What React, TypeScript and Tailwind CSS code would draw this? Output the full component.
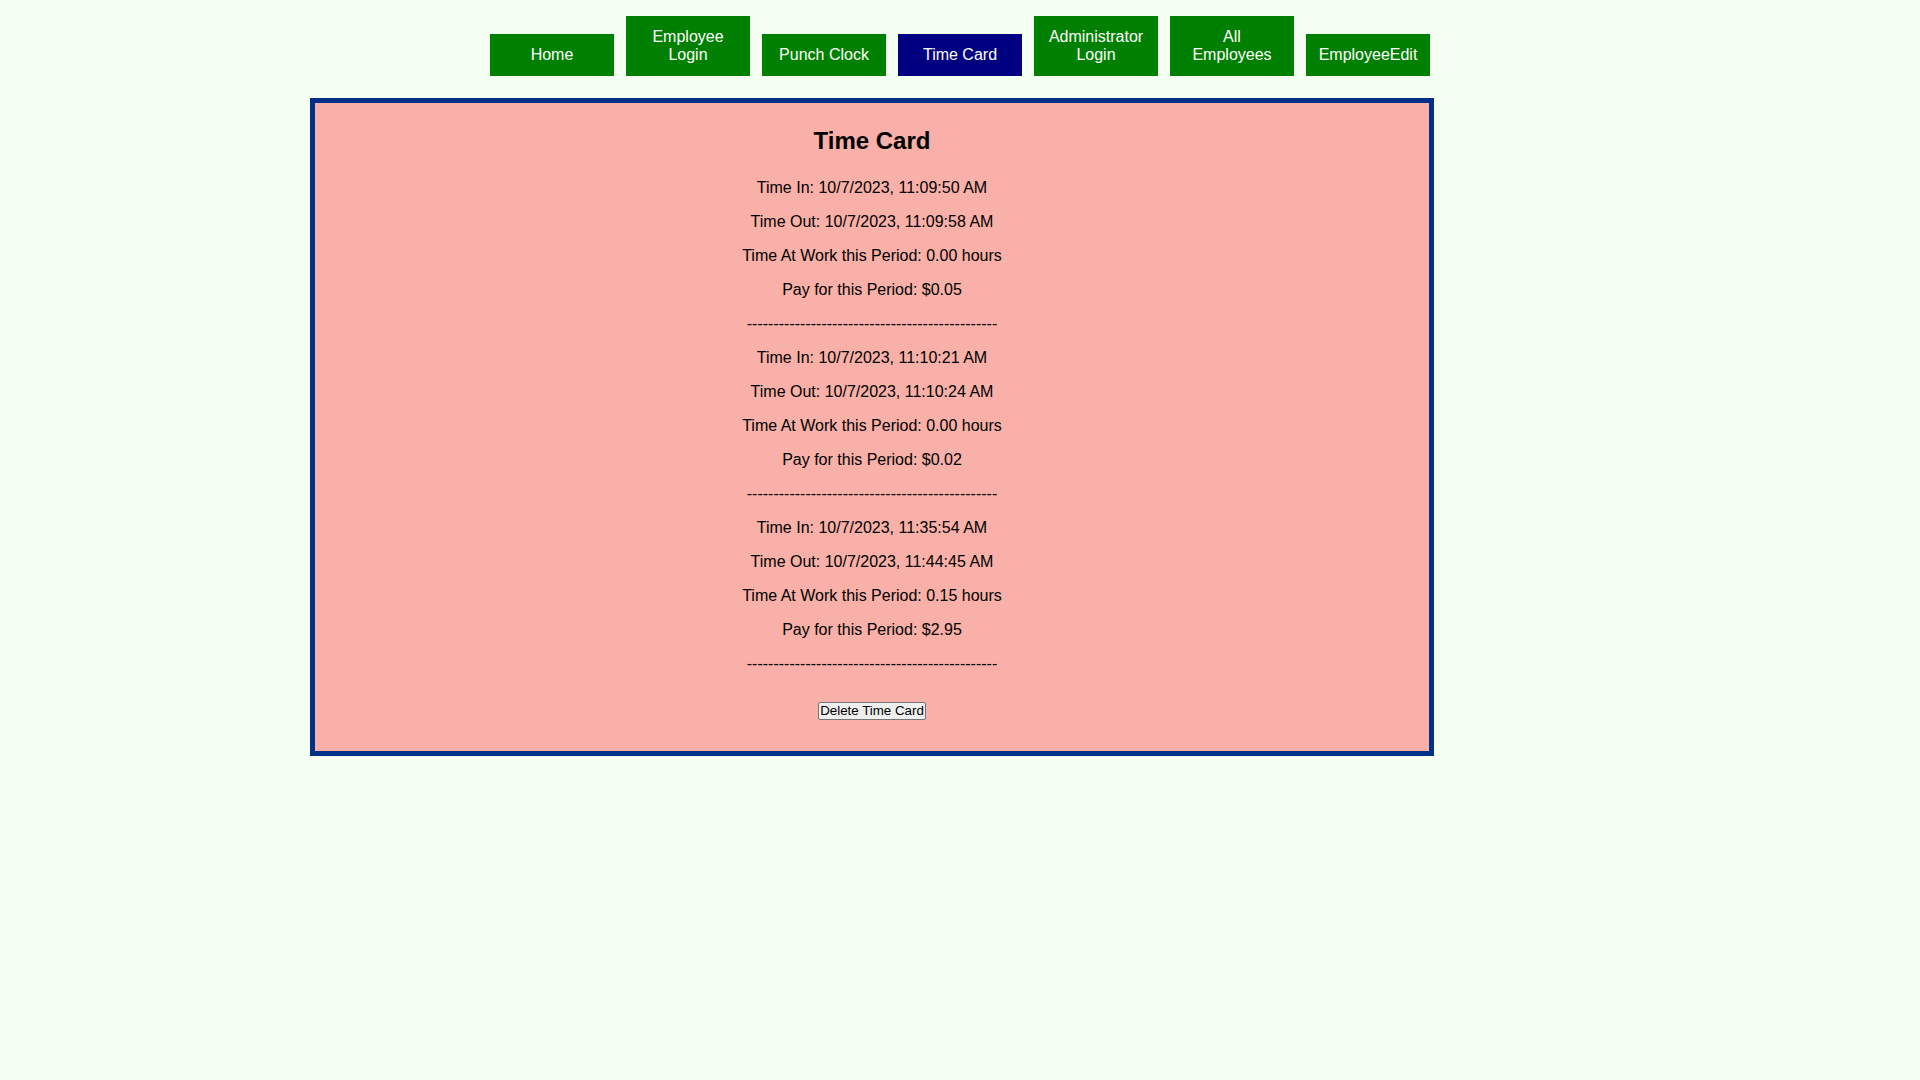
import React from "react";

const navItems = [
  { label: ["Home"], active: false },
  { label: ["Employee", "Login"], active: false },
  { label: ["Punch Clock"], active: false },
  { label: ["Time Card"], active: true },
  { label: ["Administrator", "Login"], active: false },
  { label: ["All", "Employees"], active: false },
  { label: ["EmployeeEdit"], active: false },
];

const entries = [
  {
    timeIn: "10/7/2023, 11:09:50 AM",
    timeOut: "10/7/2023, 11:09:58 AM",
    hours: "0.00",
    pay: "0.05",
  },
  {
    timeIn: "10/7/2023, 11:10:21 AM",
    timeOut: "10/7/2023, 11:10:24 AM",
    hours: "0.00",
    pay: "0.02",
  },
  {
    timeIn: "10/7/2023, 11:35:54 AM",
    timeOut: "10/7/2023, 11:44:45 AM",
    hours: "0.15",
    pay: "2.95",
  },
];

const dashes = "-".repeat(47);

const App = () => {
  return (
    <div className="min-h-screen bg-[#f4fff2] pt-4 font-['Liberation_Sans',Arial,sans-serif]">
      <nav className="flex justify-center items-end gap-3">
        {navItems.map((item) => (
          <button
            key={item.label.join(" ")}
            className={`w-[124px] py-3 text-white text-[16px] leading-[18px] text-center ${
              item.active ? "bg-[#000080]" : "bg-[#008000]"
            }`}
          >
            {item.label.map((line) => (
              <div key={line}>{line}</div>
            ))}
          </button>
        ))}
      </nav>

      <div className="mt-[22px] ml-[310px] w-[1124px] border-[5px] border-[#003087] bg-[#f8b0a8] pt-6 pb-[31px] flex flex-col items-center text-black">
        <h2 className="text-[24px] leading-[28px] font-bold mb-[24px]">Time Card</h2>
        <div className="flex flex-col items-center gap-4 text-[16px] leading-[18px]">
          {entries.map((e) => (
            <React.Fragment key={e.timeIn}>
              <p>Time In: {e.timeIn}</p>
              <p>Time Out: {e.timeOut}</p>
              <p>Time At Work this Period: {e.hours} hours</p>
              <p>Pay for this Period: ${e.pay}</p>
              <p>{dashes}</p>
            </React.Fragment>
          ))}
        </div>
        <button className="mt-[29px] h-[18px] px-[1px] text-[13.33px] leading-[16px] bg-[#efefef] border border-[#767676] rounded-[2px] text-black">
          Delete Time Card
        </button>
      </div>
    </div>
  );
};

export default App;
